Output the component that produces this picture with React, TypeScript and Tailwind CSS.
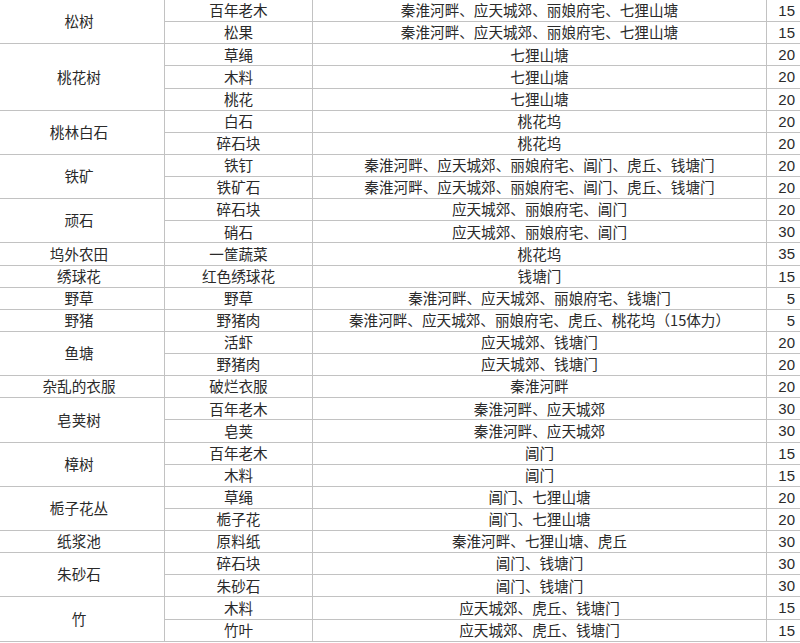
const GROUPS: { name: string; items: [string, string, string][] }[] = [
  {
    name: "松树",
    items: [
      ["百年老木", "秦淮河畔、应天城郊、丽娘府宅、七狸山塘", "15"],
      ["松果", "秦淮河畔、应天城郊、丽娘府宅、七狸山塘", "15"],
    ],
  },
  {
    name: "桃花树",
    items: [
      ["草绳", "七狸山塘", "20"],
      ["木料", "七狸山塘", "20"],
      ["桃花", "七狸山塘", "20"],
    ],
  },
  {
    name: "桃林白石",
    items: [
      ["白石", "桃花坞", "20"],
      ["碎石块", "桃花坞", "20"],
    ],
  },
  {
    name: "铁矿",
    items: [
      ["铁钉", "秦淮河畔、应天城郊、丽娘府宅、阊门、虎丘、钱塘门", "20"],
      ["铁矿石", "秦淮河畔、应天城郊、丽娘府宅、阊门、虎丘、钱塘门", "20"],
    ],
  },
  {
    name: "顽石",
    items: [
      ["碎石块", "应天城郊、丽娘府宅、阊门", "20"],
      ["硝石", "应天城郊、丽娘府宅、阊门", "30"],
    ],
  },
  { name: "坞外农田", items: [["一筐蔬菜", "桃花坞", "35"]] },
  { name: "绣球花", items: [["红色绣球花", "钱塘门", "15"]] },
  { name: "野草", items: [["野草", "秦淮河畔、应天城郊、丽娘府宅、钱塘门", "5"]] },
  {
    name: "野猪",
    items: [["野猪肉", "秦淮河畔、应天城郊、丽娘府宅、虎丘、桃花坞（15体力）", "5"]],
  },
  {
    name: "鱼塘",
    items: [
      ["活虾", "应天城郊、钱塘门", "20"],
      ["野猪肉", "应天城郊、钱塘门", "20"],
    ],
  },
  { name: "杂乱的衣服", items: [["破烂衣服", "秦淮河畔", "20"]] },
  {
    name: "皂荚树",
    items: [
      ["百年老木", "秦淮河畔、应天城郊", "30"],
      ["皂荚", "秦淮河畔、应天城郊", "30"],
    ],
  },
  {
    name: "樟树",
    items: [
      ["百年老木", "阊门", "15"],
      ["木料", "阊门", "15"],
    ],
  },
  {
    name: "栀子花丛",
    items: [
      ["草绳", "阊门、七狸山塘", "20"],
      ["栀子花", "阊门、七狸山塘", "20"],
    ],
  },
  { name: "纸浆池", items: [["原料纸", "秦淮河畔、七狸山塘、虎丘", "30"]] },
  {
    name: "朱砂石",
    items: [
      ["碎石块", "阊门、钱塘门", "30"],
      ["朱砂石", "阊门、钱塘门", "30"],
    ],
  },
  {
    name: "竹",
    items: [
      ["木料", "应天城郊、虎丘、钱塘门", "15"],
      ["竹叶", "应天城郊、虎丘、钱塘门", "15"],
    ],
  },
];

const cell = "border border-[#c2c2c2] p-0 leading-none";

export default function App() {
  return (
    <div className="h-[643px] w-[800px] overflow-hidden bg-white">
      <table
        className="ml-[-7px] mt-[-1px] w-[860px] table-fixed border-collapse text-[14.6px] text-[#2a2a2a]"
        style={{ fontFamily: '"Noto Sans CJK SC", "Liberation Sans", sans-serif' }}
      >
        <colgroup>
          <col className="w-[171px]" />
          <col className="w-[148px]" />
          <col className="w-[454px]" />
          <col />
        </colgroup>
        <tbody>
          {GROUPS.flatMap((g) =>
            g.items.map(([item, place, energy], i) => (
              <tr key={g.name + i} className="h-[22.14px]">
                {i === 0 && (
                  <td rowSpan={g.items.length} className={`${cell} text-center`}>
                    {g.name}
                  </td>
                )}
                <td className={`${cell} text-center`}>{item}</td>
                <td className={`${cell} text-center`}>{place}</td>
                <td
                  className={`${cell} text-left pl-[5px] text-[15px]`}
                  style={{ fontFamily: '"Liberation Sans", sans-serif' }}
                >
                  <span className="inline-block w-[23px] text-right">{energy}</span>
                </td>
              </tr>
            ))
          )}
        </tbody>
      </table>
    </div>
  );
}
